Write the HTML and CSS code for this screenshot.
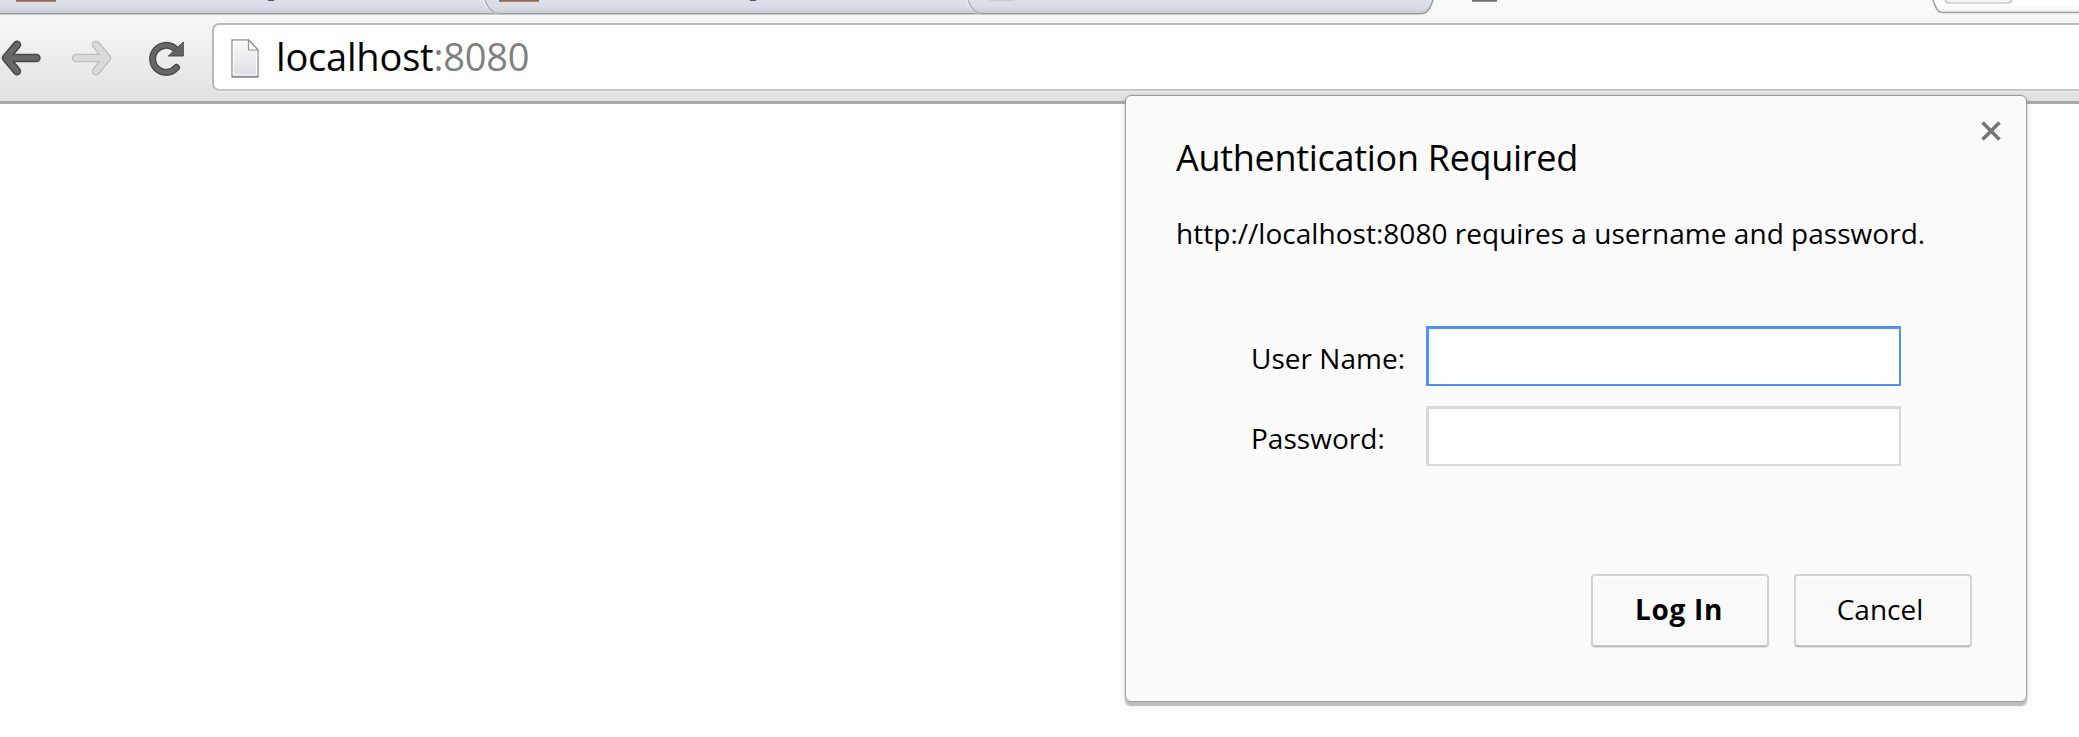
FILE: index.html
```
<!doctype html>
<html lang="en">

<head>
    <meta charset="UTF-8">
    <title>localhost:8080</title>
    <link rel="stylesheet" href="styles.css">
</head>

<body>
    <div class="browser">
        <svg class="tabs" width="2079" height="15" viewBox="0 0 2079 15">
            <defs>
                <linearGradient id="tabFill" x1="0" y1="0" x2="0" y2="1">
                    <stop offset="0" stop-color="#dce1e9" />
                    <stop offset=".5" stop-color="#d9dee6" />
                    <stop offset="1" stop-color="#c8ccd3" />
                </linearGradient>
                <linearGradient id="endFill" x1="0" y1="0" x2="0" y2="1">
                    <stop offset=".4" stop-color="#ffffff" />
                    <stop offset="1" stop-color="#ececec" />
                </linearGradient>
            </defs>
            <rect width="2079" height="15" fill="#f9f9f9" />
            <path d="M0 0H1433C1430 9 1427 13.5 1421 13.5H0Z" fill="url(#tabFill)" />
            <path d="M0 13.8H1421C1427 13.8 1430 9 1433 0" fill="none" stroke="#999b9e" stroke-width="1.5" />
            <path d="M483 0C487 8 490 13 498 13.5M966.5 0C970 8 973 13 981 13.5" fill="none" stroke="#eef0f2" stroke-width="1.5" />
            <path d="M485 0C488 8 491 13 499 13.5M968 0C971 8 974 13 982 13.5" fill="none" stroke="#a9adaf" stroke-width="1.3" />
            <path d="M1933 0C1936 9 1938 12.5 1943 12.5H2079V0Z" fill="url(#endFill)" />
            <path d="M1933 0C1936 9 1938 12.5 1943 12.5H2079" fill="none" stroke="#a2a2a2" stroke-width="1.6" />
            <path d="M1945 0Q1946 3 1950 3H2007Q2011 3 2012 0" fill="#f5f5f5" stroke="#b8b8b8" stroke-width="1.2" />
            <path d="M16 0H56V1.7H16ZM499 0H539V1.7H499Z" fill="#98664c" />
            <path d="M267 0H275L273 1H269ZM749 0H757L755 1H751Z" fill="#4c5663" />
            <path d="M990 0H1014V1H990Z" fill="#c9cdd4" />
            <path d="M1472 0H1497V1.7H1472Z" fill="#6a6a6a" />
        </svg>

        <div class="toolbar">
            <svg class="icon" width="212" height="50" viewBox="0 33 212 50">
                <g fill="none" stroke-linecap="round" stroke-linejoin="round">
                    <path d="M17 44.8L6 58L17 71.2M6.5 58H36.5" stroke="#484848" stroke-width="8.4" />
                    <path d="M17 44.8L6 58L17 71.2M6.5 58H36.5" stroke="#676767" stroke-width="5.4" />
                    <path d="M96 44.8L107 58L96 71.2M106.5 58H76" stroke="#bebebe" stroke-width="8.4" />
                    <path d="M96 44.8L107 58L96 71.2M106.5 58H76" stroke="#d9d9d9" stroke-width="6" />
                    <path d="M176.5 67.5A13.5 13.5 0 1 1 174.5 48.3" stroke="#484848" stroke-width="7" />
                    <path d="M176.5 67.5A13.5 13.5 0 1 1 174.5 48.3" stroke="#676767" stroke-width="4.4" />
                </g>
                <path d="M183.3 42V56H168.3Z" fill="#636363" stroke="#4d4d4d" stroke-width="1" />
            </svg>
            <div class="omnibox">
                <svg class="page-icon" width="28" height="39" viewBox="0 0 28 39">
                    <defs>
                        <linearGradient id="paper" x1="0" y1="0" x2="0" y2="1">
                            <stop offset="0" stop-color="#fbfbfc" />
                            <stop offset="1" stop-color="#dcdee3" />
                        </linearGradient>
                    </defs>
                    <path d="M1 1H17.5L27 11V37.5H1Z" fill="url(#paper)" stroke="#929292" stroke-width="1.4" />
                    <path d="M2.3 36V2.3H16.5M25.7 12V36H2.3" fill="none" stroke="#fff" stroke-width="1" />
                    <path d="M17.5 1V11H27Z" fill="#fff" stroke="#929292" stroke-width="1.2" />
                    <path d="M.5 38H27.5" stroke="#858585" stroke-width="1.2" />
                </svg>
                <span class="url">localhost<span class="port">:8080</span></span>
            </div>
        </div>
    </div>

    <form class="dialog">
        <svg class="close" width="22" height="22" viewBox="0 0 22 22">
            <path d="M2.5 2.5L19.5 19.5M19.5 2.5L2.5 19.5" stroke="#757575" stroke-width="3.6" />
        </svg>
        <h1>Authentication Required</h1>
        <p>http://localhost:8080 requires a username and password.</p>
        <div class="fields">
            <label for="user">User Name:</label>
            <input type="text" id="user" class="active">
            <label for="pass">Password:</label>
            <input type="password" id="pass">
        </div>
        <div class="buttons">
            <button type="button" class="login">Log In</button>
            <button type="button">Cancel</button>
        </div>
    </form>
</body>

</html>
```
FILE: styles.css
```
* {
    margin: 0;
    padding: 0;
    box-sizing: border-box;
}

body {
    height: 737px;
    overflow: hidden;
    background: #fff;
    color: #000;
    font-family: "Open Sans", "Noto Sans", sans-serif;
}

svg {
    display: block;
    flex: none;
}

/* toolbar */
.toolbar {
    display: flex;
    height: 89px;
    padding-top: 8px;
    border-bottom: 3px solid #a9a9a9;
    background: linear-gradient(#f8f8f8, #e1e1e1);
}

.icon {
    margin-top: 10px;
}

.omnibox {
    display: flex;
    flex: 1;
    height: 68px;
    padding: 14px 0 0 17px;
    border: 2px solid #b9b9b9;
    border-right: 0;
    border-bottom-color: #c6c6c6;
    border-radius: 7px 0 0 7px;
    background: #fff;
    box-shadow: 0 1px 0 #eee;
}

.url {
    margin: -9px 0 0 17px;
    font-size: 38px;
    line-height: 52px;
    letter-spacing: -0.2px;
}

.port {
    color: #808080;
}

/* login popup */
.dialog {
    position: absolute;
    left: 1125px;
    top: 95px;
    width: 902px;
    height: 607px;
    padding: 37px 54px 0 50px;
    border: 1px solid #999;
    border-radius: 6px;
    background: #fbfbfb;
    box-shadow: 0 4px 1px #bdbdbd, 0 2px 6px rgba(0, 0, 0, .16);
    font-size: 28px;
    line-height: 40px;
    letter-spacing: 0.03px;
}

.close {
    position: absolute;
    top: 24px;
    right: 24px;
}

.dialog h1 {
    font-size: 36px;
    font-weight: 400;
    line-height: 50px;
    letter-spacing: -0.3px;
}

.dialog p {
    margin-top: 30px;
    white-space: nowrap;
}

.fields {
    display: grid;
    grid-template-columns: 175px 475px;
    row-gap: 20px;
    margin: 73px 0 0 75px;
}

.fields label {
    padding-top: 12px;
}

.fields input {
    height: 60px;
    border: solid #d9d9d9;
    border-width: 3px 2px 2px 3px;
    outline: 0;
    background: #fff;
}

.fields input.active {
    border-color: #4d90fe;
}

.buttons {
    display: flex;
    justify-content: flex-end;
    gap: 25px;
    margin-top: 108px;
}

.buttons button {
    width: 178px;
    height: 73px;
    padding: 0 6px 4px 0;
    border: 2px solid #d3d3d3;
    border-bottom-color: #bebebe;
    border-radius: 4px;
    background: #f9f9f9;
    box-shadow: inset 0 0 0 1px #fefefe, 0 1px 1px #ddd;
    color: #000;
    font: 28px/40px "Open Sans", "Noto Sans", sans-serif;
}

.buttons .login {
    padding-right: 2px;
    font-weight: 700;
    letter-spacing: 0.7px;
}
```
